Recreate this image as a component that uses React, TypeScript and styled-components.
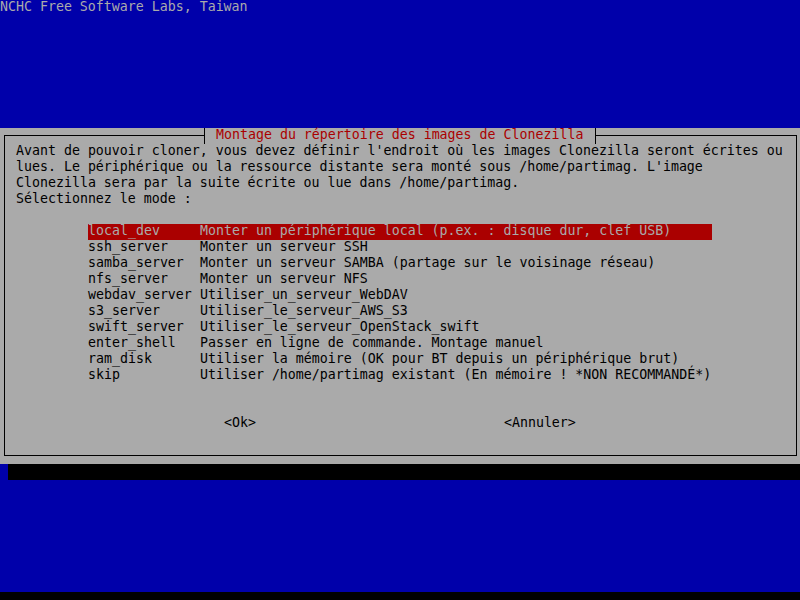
import styled, { createGlobalStyle } from "styled-components";

const BLUE = "#0000aa";
const GRAY = "#aaaaaa";
const RED = "#aa0000";
const CELL = 8;
const ROW = 16;

const GlobalStyle = createGlobalStyle`
  html, body {
    margin: 0;
    padding: 0;
    background: #000;
  }
  body {
    font-family: "DejaVu Sans Mono", "Liberation Mono", monospace;
    font-size: 13.288px;
  }
`;

const items = [
  ["local_dev", "Monter un périphérique local (p.ex. : disque dur, clef USB)"],
  ["ssh_server", "Monter un serveur SSH"],
  ["samba_server", "Monter un serveur SAMBA (partage sur le voisinage réseau)"],
  ["nfs_server", "Monter un serveur NFS"],
  ["webdav_server", "Utiliser_un_serveur_WebDAV"],
  ["s3_server", "Utiliser_le_serveur_AWS_S3"],
  ["swift_server", "Utiliser_le_serveur_OpenStack_swift"],
  ["enter_shell", "Passer en ligne de commande. Montage manuel"],
  ["ram_disk", "Utiliser la mémoire (OK pour BT depuis un périphérique brut)"],
  ["skip", "Utiliser /home/partimag existant (En mémoire ! *NON RECOMMANDÉ*)"],
];

const message = [
  "Avant de pouvoir cloner, vous devez définir l'endroit où les images Clonezilla seront écrites ou",
  "lues. Le périphérique ou la ressource distante sera monté sous /home/partimag. L'image",
  "Clonezilla sera par la suite écrite ou lue dans /home/partimag.",
  "Sélectionnez le mode :",
];

const App = () => {
  return (
    <Screen>
      <GlobalStyle />
      <Desktop>
        <Backtitle>NCHC Free Software Labs, Taiwan</Backtitle>

        <Dialog>
          <Frame>
            <TitleBar>
              <Tee $side="left" />
              <TitleText>Montage du répertoire des images de Clonezilla</TitleText>
              <Tee $side="right" />
            </TitleBar>

            <Message>
              {message.map((line) => (
                <Line key={line}>{line}</Line>
              ))}
            </Message>

            <Menu>
              {items.map(([tag, desc], i) => (
                <MenuItem key={tag} $selected={i === 0}>
                  <Tag>{tag}</Tag>
                  <Line>{desc}</Line>
                </MenuItem>
              ))}
            </Menu>

            <Buttons>
              <Button>&lt;Ok&gt;</Button>
              <Button>&lt;Annuler&gt;</Button>
            </Buttons>
          </Frame>
        </Dialog>
        <Shadow />
      </Desktop>
    </Screen>
  );
};

export default App;

const Screen = styled.div`
  width: 800px;
  height: 600px;
  background: #000;
  overflow: hidden;
`;

const Desktop = styled.div`
  height: ${37 * ROW}px;
  background: ${BLUE};
  display: flex;
  flex-direction: column;
`;

// line-height below the row height keeps underscores inside the cell
const Line = styled.div`
  height: ${ROW}px;
  line-height: 14px;
  white-space: pre;
`;

const Backtitle = styled(Line)`
  color: ${GRAY};
  margin-bottom: ${7 * ROW}px;
`;

const Dialog = styled.div`
  height: ${21 * ROW}px;
  box-sizing: border-box;
  background: ${GRAY};
  color: #000;
  padding: 7px 3px 8px 4px;
  display: flex;
`;

const Frame = styled.div`
  position: relative;
  flex: 1;
  border: 1px solid #000;
  padding: 8px 0 0 11px;
  display: flex;
  flex-direction: column;
`;

const TitleBar = styled.div`
  position: absolute;
  top: -8px;
  left: ${25 * CELL - 5}px;
  height: ${ROW}px;
  display: flex;
`;

const Tee = styled.div<{ $side: "left" | "right" }>`
  width: ${CELL}px;
  height: ${ROW}px;
  background: ${(p) =>
    p.$side === "left"
      ? `linear-gradient(to right, transparent 0 4px, #000 4px 5px, ${GRAY} 5px 8px)`
      : `linear-gradient(to right, ${GRAY} 0 4px, #000 4px 5px, transparent 5px 8px)`};
`;

const TitleText = styled(Line)`
  background: ${GRAY};
  color: ${RED};
  padding: 0 ${CELL}px;
`;

const Message = styled.div`
  margin-bottom: ${ROW}px;
`;

const Menu = styled.div`
  width: ${78 * CELL}px;
  margin-left: ${9 * CELL}px;
  margin-bottom: ${2 * ROW}px;
`;

const MenuItem = styled.div<{ $selected?: boolean }>`
  display: flex;
  height: ${ROW}px;
  background: ${(p) => (p.$selected ? RED : "transparent")};
  color: ${(p) => (p.$selected ? GRAY : "#000")};
`;

const Tag = styled(Line)`
  width: ${14 * CELL}px;
  flex-shrink: 0;
`;

const Buttons = styled.div`
  display: flex;
  gap: ${31 * CELL}px;
  padding-left: ${26 * CELL}px;
`;

const Button = styled(Line)``;

const Shadow = styled.div`
  height: ${ROW}px;
  margin-left: ${CELL}px;
  background: #000;
`;
